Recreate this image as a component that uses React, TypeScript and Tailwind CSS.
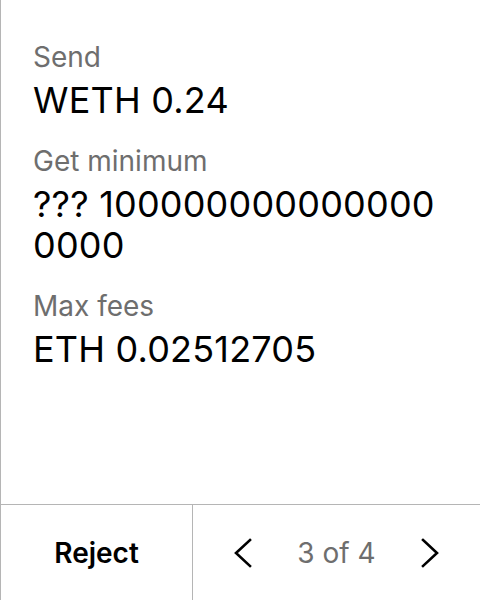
const rows = [
  { label: "Send", value: "WETH 0.24" },
  { label: "Get minimum", value: "??? 1000000000000000000" },
  { label: "Max fees", value: "ETH 0.02512705" },
];

function Chevron({ dir }: { dir: "left" | "right" }) {
  return (
    <svg width="20" height="32" viewBox="0 0 20 32" fill="none" stroke="currentColor" strokeWidth="2.6" strokeLinecap="square">
      <polyline points={dir === "left" ? "17,3 3,16 17,29" : "3,3 17,16 3,29"} />
    </svg>
  );
}

export default function App() {
  return (
    <div className="flex h-[600px] w-[480px] flex-col border-l border-[#b5b5b5] bg-white font-['Inter',sans-serif] text-black">
      <div className="flex flex-1 flex-col gap-[23px] px-8 pt-[40px]">
        {rows.map((row) => (
          <div key={row.label} className="flex flex-col gap-[6px]">
            <span className="text-[28px] leading-[34px] text-[#6e6e6e]">{row.label}</span>
            <span className="break-all text-[36px] leading-[41px] tracking-[0.2px]">{row.value}</span>
          </div>
        ))}
      </div>
      <div className="flex h-[96px] border-t border-[#b5b5b5]">
        <button className="flex w-[192px] items-center justify-center border-r border-[#b5b5b5] text-[28px] font-semibold">
          Reject
        </button>
        <div className="grid flex-1 grid-cols-3 items-center">
          <div className="flex justify-center pl-1">
            <Chevron dir="left" />
          </div>
          <span className="text-center text-[28px] text-[#6e6e6e]">3 of 4</span>
          <div className="flex justify-center pr-1">
            <Chevron dir="right" />
          </div>
        </div>
      </div>
    </div>
  );
}
